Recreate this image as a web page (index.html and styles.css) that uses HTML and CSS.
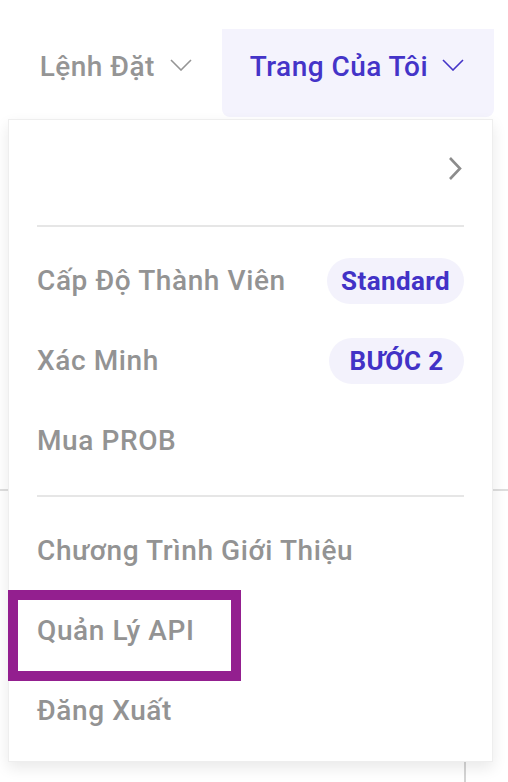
FILE: index.html
```html
<!DOCTYPE html>
<html lang="vi">
<head>
<meta charset="utf-8">
<title>Trang Của Tôi</title>
<link rel="stylesheet" href="styles.css">
</head>
<body>
<div class="page">
  <header class="nav">
    <div class="nav-item">
      <span class="nav-label">Lệnh Đặt</span>
      <svg class="caret" viewBox="0 0 22 12" width="22" height="12"><path d="M1 1 L11 11 L21 1" fill="none" stroke="currentColor" stroke-width="1.6"/></svg>
    </div>
    <div class="nav-item active">
      <span class="nav-label">Trang Của Tôi</span>
      <svg class="caret" viewBox="0 0 22 12" width="22" height="12"><path d="M1 1 L11 11 L21 1" fill="none" stroke="currentColor" stroke-width="1.6"/></svg>
    </div>
  </header>

  <main class="content">
    <div class="content-row"></div>
    <div class="content-bottom"><div class="content-col"></div></div>
  </main>

  <div class="dropdown">
    <div class="menu-item user-row">
      <span class="user-name"></span>
      <svg class="arrow-right" viewBox="0 0 14 25" width="14" height="25"><path d="M2 2 L12 12.5 L2 23" fill="none" stroke="currentColor" stroke-width="2.6"/></svg>
    </div>
    <div class="divider"></div>
    <div class="menu-item"><span>Cấp Độ Thành Viên</span><span class="badge">Standard</span></div>
    <div class="menu-item"><span>Xác Minh</span><span class="badge">BƯỚC 2</span></div>
    <div class="menu-item"><span>Mua PROB</span></div>
    <div class="divider"></div>
    <div class="menu-item"><span>Chương Trình Giới Thiệu</span></div>
    <div class="menu-item highlighted"><span>Quản Lý API</span><span class="highlight-box"></span></div>
    <div class="menu-item"><span>Đăng Xuất</span></div>
  </div>
</div>
</body>
</html>
```

FILE: styles.css
```css
html, body {
  margin: 0;
  padding: 0;
  background: #ffffff;
}

body {
  font-family: Roboto, "Noto Sans", "Liberation Sans", sans-serif;
  -webkit-font-smoothing: antialiased;
}

.page {
  position: relative;
  width: 508px;
  height: 782px;
  overflow: hidden;
}

.nav {
  display: flex;
  justify-content: flex-end;
  padding: 29px 14px 0 0;
  height: 88px;
}

.nav-item {
  display: flex;
  align-items: center;
  gap: 15px;
  padding: 21px 30px 33px 28px;
  height: 34px;
  color: #959595;
  font-size: 28px;
  font-weight: 500;
  line-height: 34px;
  letter-spacing: 0.45px;
}

.nav-item.active {
  background: #f4f3fd;
  color: #4434c8;
  border-radius: 0 0 8px 8px;
  gap: 14px;
}

.caret {
  display: block;
  margin-top: -4px;
}

.content {
  position: relative;
}

.content-row {
  height: 372px;
  border-bottom: 2px solid #dedede;
}

.content-bottom {
  display: flex;
  justify-content: flex-end;
  padding-right: 42px;
}

.content-col {
  width: 0;
  height: 300px;
  border-left: 2px solid #d4d4d4;
}

.dropdown {
  position: absolute;
  top: 119px;
  left: 8px;
  width: 485px;
  box-sizing: border-box;
  background: #ffffff;
  border: 1px solid #eeeeee;
  box-shadow: 0 6px 14px rgba(0, 0, 0, 0.09);
  padding: 11px 28px 10px 28px;
}

.menu-item {
  position: relative;
  display: flex;
  align-items: center;
  justify-content: space-between;
  height: 80px;
  color: #939393;
  font-size: 28px;
  font-weight: 500;
  line-height: 80px;
  letter-spacing: 0.6px;
}

.user-row {
  height: 80px;
}

.user-name {
  display: block;
}

.arrow-right {
  display: block;
  color: #8c8c8c;
  margin-right: 2px;
  margin-top: -5px;
}

.divider {
  height: 2px;
  background: #e6e6e6;
  margin: 14px 0;
}

.badge {
  display: inline-block;
  box-sizing: border-box;
  min-width: 135px;
  height: 46px;
  line-height: 46px;
  padding: 0 14px;
  border-radius: 23px;
  background: #f3f2fc;
  color: #4232c6;
  font-size: 26px;
  font-weight: 700;
  letter-spacing: 0.4px;
  text-align: center;
}

.highlight-box {
  position: absolute;
  left: -29px;
  top: -1px;
  width: 233px;
  height: 91px;
  box-sizing: border-box;
  border: 10px solid #931f8f;
  pointer-events: none;
}
```
